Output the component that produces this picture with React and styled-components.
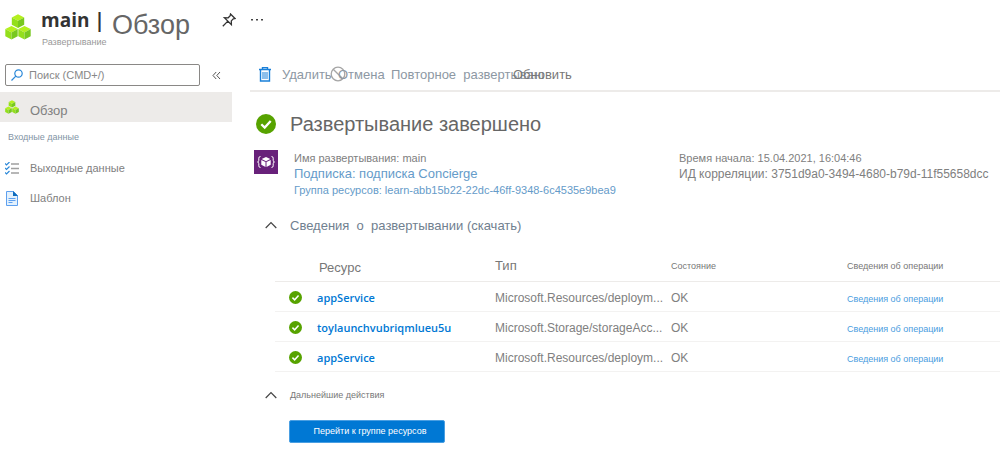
import styled, { createGlobalStyle } from "styled-components";

const GlobalStyle = createGlobalStyle`
  * {
    box-sizing: border-box;
  }
  body {
    margin: 0;
    background-color: white;
    color: #777;
    font-family: "Liberation Sans", Arial, sans-serif;
    font-size: 12px;
    overflow-x: hidden;
  }
  a {
    text-decoration: none;
  }
  button {
    font-family: inherit;
    cursor: pointer;
  }
`;

const Page = styled.div`
  min-height: 100vh;
  overflow: hidden;
`;

const Header = styled.header`
  display: flex;
  align-items: flex-start;
  height: 60px;
  padding: 8px 5px 0;
`;

const Logo = styled.div`
  width: 36px;
  padding-top: 6px;
`;

const Titles = styled.div`
  width: 71px;
`;

const Name = styled.div`
  color: #333;
  font-family: "Open Sans", "Noto Sans", sans-serif;
  font-size: 19px;
  font-weight: 700;
  line-height: 24px;
  white-space: nowrap;
`;

const Kind = styled.div`
  padding: 4px 0 0 1px;
  color: #999;
  font-size: 9px;
  line-height: 12px;
`;

const Title = styled.h1`
  width: 105px;
  margin: 0;
  padding-top: 3px;
  color: #666;
  font-size: 27px;
  font-weight: 400;
  line-height: 28px;
`;

const IconButton = styled.button`
  display: flex;
  align-items: center;
  justify-content: center;
  width: 24px;
  height: 24px;
  margin-right: 4px;
  padding: 0;
  border: none;
  background: none;
  color: #333;
`;

const Body = styled.div`
  display: flex;
  gap: 18px;
`;

const Sidebar = styled.nav`
  flex: 0 0 232px;
`;

const SearchRow = styled.div`
  display: flex;
  align-items: center;
  gap: 4px;
  height: 32px;
  padding: 0 0 2px 5px;
`;

const SearchBox = styled.label`
  display: flex;
  align-items: center;
  gap: 6px;
  width: 195px;
  height: 22px;
  padding-left: 5px;
  border: 1px solid #8a8886;
  border-radius: 2px;
`;

const SearchInput = styled.input`
  flex: 1;
  min-width: 0;
  padding: 0;
  border: none;
  outline: none;
  background: none;
  color: #777;
  font-family: inherit;
  font-size: 11px;
  &::placeholder {
    color: #888;
    opacity: 1;
  }
`;

const NavItem = styled.a`
  display: flex;
  align-items: center;
  gap: 11px;
  height: 30px;
  padding-left: 5px;
  background-color: ${(props) => (props.$active ? "#edebe9" : "transparent")};
  color: #808080;
  font-size: ${(props) => (props.$active ? "13px" : "11px")};
`;

const NavLabel = styled.span`
  padding-top: ${(props) => (props.$low ? "6px" : "0")};
`;

const NavHeading = styled.div`
  height: 31px;
  padding-left: 8px;
  color: #8294a5;
  font-size: 9px;
  line-height: 30px;
`;

const Main = styled.main`
  flex: 1;
  min-width: 0;
`;

const Toolbar = styled.div`
  display: grid;
  grid-template-columns: 72px 61px 122px 1fr;
  align-items: center;
  height: 32px;
  padding: 0 0 2px 8px;
  border-bottom: 2px solid #edebe9;
`;

const Command = styled.button`
  display: flex;
  align-items: center;
  width: 0;
  padding: 0;
  border: none;
  background: none;
  color: ${(props) => (props.$dark ? "#777" : "#8d98a3")};
  font-size: 13px;
  white-space: nowrap;
  svg {
    flex-shrink: 0;
    margin-right: ${(props) => props.$iconSpace || "0"};
  }
`;

const ClippedLabel = styled.span`
  flex: 0 0 153px;
  overflow: hidden;
  text-align: left;
  white-space: pre;
`;

const Status = styled.div`
  display: flex;
  align-items: center;
  gap: 14px;
  height: 58px;
  padding: 6px 0 0 6px;
`;

const StatusTitle = styled.h2`
  margin: 0;
  color: #666;
  font-size: 20px;
  font-weight: 400;
`;

const Info = styled.div`
  display: grid;
  grid-template-columns: 40px 385px 1fr;
  height: 54px;
  padding-left: 4px;
`;

const Lines = styled.div`
  display: flex;
  flex-direction: column;
  min-width: 0;
  color: #808080;
  line-height: 16px;
  white-space: nowrap;
`;

const Line = styled.span`
  font-size: ${(props) => (props.$large ? "12px" : "11px")};
`;

const LineLink = styled.a`
  color: #659bc9;
  font-size: ${(props) => (props.$large ? "13px" : "11px")};
`;

const Section = styled.button`
  display: flex;
  align-items: center;
  gap: 13px;
  height: ${(props) => (props.$small ? "46px" : "42px")};
  padding: 0 0 0 15px;
  border: none;
  background: none;
  color: ${(props) => (props.$small ? "#777" : "#70808f")};
  font-size: ${(props) => (props.$small ? "9px" : "13px")};
  white-space: pre;
`;

const Table = styled.table`
  width: calc(100% - 25px);
  margin-left: 25px;
  border-collapse: collapse;
  table-layout: fixed;
`;

const HeadCell = styled.th`
  width: ${(props) => props.$width || "auto"};
  height: 35px;
  padding: ${(props) => (props.$first ? "8px 0 0 44px" : "5px 0 0")};
  border-bottom: 1px solid #edebe9;
  color: #777;
  font-size: ${(props) => props.$size};
  font-weight: 400;
  text-align: left;
`;

const Cell = styled.td`
  height: 30px;
  padding: 3px 0 0;
  border-bottom: 1px solid #f3f2f1;
  color: #808080;
  font-size: 12px;
  white-space: nowrap;
`;

const Resource = styled.div`
  display: flex;
  align-items: center;
  gap: 15px;
  padding-left: 14px;
`;

const ResourceLink = styled.a`
  color: #0078d4;
  font-family: "Open Sans", "Noto Sans", sans-serif;
  font-size: 11px;
  font-weight: 600;
  line-height: 16px;
`;

const DetailsLink = styled.a`
  color: #4a9de0;
  font-size: 9px;
`;

const GroupButton = styled.button`
  display: block;
  width: 156px;
  height: 23px;
  margin: 2px 0 0 39px;
  padding: 0 0 0 6px;
  border: 1px solid #4a9fe2;
  border-radius: 2px;
  background-color: #0078d4;
  color: white;
  font-size: 9px;
`;

const Cube = ({ x, y }) => (
  <g transform={`translate(${x} ${y})`}>
    <path d="M6.200 0L12.400 3.200 6.200 6.500 0 3.200z" fill="#b4f01e" />
    <path d="M0 3.200L6.200 6.500v7.200L0 10.400z" fill="#93df1c" />
    <path d="M12.400 3.200L6.200 6.500v7.200l6.200-3.300z" fill="#78c820" />
  </g>
);

const CubesIcon = ({ size }) => (
  <svg width={size} height={size} viewBox="0 0 26 26">
    <Cube x={6.8} y={0.3} />
    <Cube x={0.3} y={11.9} />
    <Cube x={13.3} y={11.9} />
  </svg>
);

const PinIcon = () => (
  <svg width="14" height="14" viewBox="0 0 14 14" fill="none" stroke="#333" strokeWidth="1.3">
    <path d="M8.5 1l4.500 4.500-1.700.4-2 2 .1 3.800-7-7 3.800.1 2-2zM5.600 8.400L.8 13.200" />
  </svg>
);

const SearchIcon = () => (
  <svg width="12" height="12" viewBox="0 0 12 12" fill="none" stroke="#2b88d8" strokeWidth="1.2">
    <circle cx="7.500" cy="4.500" r="3.700" />
    <path d="M4.800 7.200L.5 11.500" />
  </svg>
);

const CollapseIcon = () => (
  <svg width="9" height="9" viewBox="0 0 9 9" fill="none" stroke="#555">
    <path d="M4.200 1L1 4.500 4.200 8M8 1L4.800 4.500 8 8" />
  </svg>
);

const OutputsIcon = () => (
  <svg width="14" height="13" viewBox="0 0 14 13" fill="none">
    <path d="M0 1.500l1.500 1.500L4.500 0M0 6l1.500 1.500L4.500 4.500M0 10.500L1.500 12 4.500 9" stroke="#2b88d8" strokeWidth="1.200" />
    <path d="M6 2h8M6 6.500h8M6 11h8" stroke="#a0a0a0" strokeWidth="1.400" />
  </svg>
);

const TemplateIcon = () => (
  <svg width="14" height="15" viewBox="0 0 14 15">
    <path d="M1.500.5h7L12.500 4.500v10h-11z" fill="#e3f1fd" stroke="#5ea0ef" />
    <path d="M8 0l5 5H8z" fill="#0f6cbd" />
    <path d="M3.500 7.500h7M3.500 9.500h7M3.500 11.500h4" stroke="#5ea0ef" />
  </svg>
);

const TrashIcon = () => (
  <svg width="14" height="15" viewBox="0 0 14 15" fill="none" stroke="#1a80d9">
    <path d="M1 2.500h12M4.500 2V.6h5V2" strokeWidth="1.400" />
    <path d="M2.500 3v11h9V3" strokeWidth="1.400" />
    <path d="M5 5v7M7 5v7M9 5v7" />
  </svg>
);

const CancelIcon = () => (
  <svg width="16" height="16" viewBox="0 0 16 16" fill="none" stroke="#a6a6a6" strokeWidth="1.300">
    <circle cx="8" cy="8" r="6.800" />
    <path d="M3.200 3.200l9.600 9.600" />
  </svg>
);

const CheckIcon = ({ size }) => (
  <svg width={size} height={size} viewBox="0 0 20 20">
    <circle cx="10" cy="10" r="10" fill="#57a300" />
    <path d="M5.300 10.200l3.400 3.400 6-6.600" fill="none" stroke="white" strokeWidth="2.300" />
  </svg>
);

const TemplateSpecIcon = () => (
  <svg width="24" height="24" viewBox="0 0 24 24">
    <path d="M0 0h24v24H0z" fill="#68217a" />
    <path d="M6.500 6.500q-1.700 0-1.700 1.700v2.100q0 1.500-1.300 1.700 1.300.2 1.300 1.700v2.100q0 1.700 1.700 1.700M17.500 6.500q1.700 0 1.700 1.700v2.100q0 1.500 1.300 1.700-1.300.2-1.300 1.700v2.100q0 1.700-1.700 1.700" fill="none" stroke="white" />
    <path d="M12 7l4.300 2L12 11.200 7.700 9zM7.300 10l4.200 2v5l-4.200-2.300zM16.700 10l-4.200 2v5l4.200-2.300z" fill="white" />
  </svg>
);

const ChevronUpIcon = () => (
  <svg width="12" height="8" viewBox="0 0 12 8" fill="none" stroke="#444" strokeWidth="1.200">
    <path d="M.7 7L6 1.500 11.300 7" />
  </svg>
);

const resources = [
  { id: 1, name: "appService", type: "Microsoft.Resources/deploym...", state: "OK" },
  { id: 2, name: "toylaunchvubriqmlueu5u", type: "Microsoft.Storage/storageAcc...", state: "OK" },
  { id: 3, name: "appService", type: "Microsoft.Resources/deploym...", state: "OK" },
];

const App = () => {
  return (
    <Page>
      <GlobalStyle />
      <Header>
        <Logo>
          <CubesIcon size={26} />
        </Logo>
        <Titles>
          <Name>main |</Name>
          <Kind>Развертывание</Kind>
        </Titles>
        <Title>Обзор</Title>
        <IconButton aria-label="Закрепить">
          <PinIcon />
        </IconButton>
        <IconButton aria-label="Еще">
          <svg width="12" height="2" viewBox="0 0 12 2" fill="#444">
            <path d="M0 0h2v1.500H0zM5 0h2v1.500H5zM10 0h2v1.500h-2z" />
          </svg>
        </IconButton>
      </Header>
      <Body>
        <Sidebar>
          <SearchRow>
            <SearchBox>
              <SearchIcon />
              <SearchInput type="text" aria-label="Поиск" placeholder="Поиск (CMD+/)" />
            </SearchBox>
            <IconButton aria-label="Свернуть">
              <CollapseIcon />
            </IconButton>
          </SearchRow>
          <NavItem href="#overview" $active>
            <CubesIcon size={14} />
            <NavLabel $low>Обзор</NavLabel>
          </NavItem>
          <NavHeading>Входные данные</NavHeading>
          <NavItem href="#outputs">
            <OutputsIcon />
            <NavLabel>Выходные данные</NavLabel>
          </NavItem>
          <NavItem href="#template">
            <TemplateIcon />
            <NavLabel>Шаблон</NavLabel>
          </NavItem>
        </Sidebar>
        <Main>
          <Toolbar>
            <Command $iconSpace="10px">
              <TrashIcon />
              Удалить
            </Command>
            <Command $iconSpace="-8px">
              <CancelIcon />
              Отмена
            </Command>
            <Command>
              <ClippedLabel>Повторное  развертывание</ClippedLabel>
            </Command>
            <Command $dark>Обновить</Command>
          </Toolbar>
          <Status>
            <CheckIcon size={20} />
            <StatusTitle>Развертывание завершено</StatusTitle>
          </Status>
          <Info>
            <TemplateSpecIcon />
            <Lines>
              <Line>Имя развертывания: main</Line>
              <LineLink href="#subscription" $large>Подписка: подписка Concierge</LineLink>
              <LineLink href="#group">Группа ресурсов: learn-abb15b22-22dc-46ff-9348-6c4535e9bea9</LineLink>
            </Lines>
            <Lines>
              <Line>Время начала: 15.04.2021, 16:04:46</Line>
              <Line $large>ИД корреляции: 3751d9a0-3494-4680-b79d-11f55658dcc</Line>
            </Lines>
          </Info>
          <Section>
            <ChevronUpIcon />
            Сведения  о  развертывании (скачать)
          </Section>
          <Table>
            <thead>
              <tr>
                <HeadCell $first $width="220px" $size="13px">Ресурс</HeadCell>
                <HeadCell $width="176px" $size="13px">Тип</HeadCell>
                <HeadCell $width="176px" $size="9px">Состояние</HeadCell>
                <HeadCell $size="9px">Сведения об операции</HeadCell>
              </tr>
            </thead>
            <tbody>
              {resources.map((item) => (
                <tr key={item.id}>
                  <Cell>
                    <Resource>
                      <CheckIcon size={13} />
                      <ResourceLink href="#resource">{item.name}</ResourceLink>
                    </Resource>
                  </Cell>
                  <Cell>{item.type}</Cell>
                  <Cell>{item.state}</Cell>
                  <Cell>
                    <DetailsLink href="#details">Сведения об операции</DetailsLink>
                  </Cell>
                </tr>
              ))}
            </tbody>
          </Table>
          <Section $small>
            <ChevronUpIcon />
            Дальнейшие действия
          </Section>
          <GroupButton>Перейти к группе ресурсов</GroupButton>
        </Main>
      </Body>
    </Page>
  );
};

export default App;
